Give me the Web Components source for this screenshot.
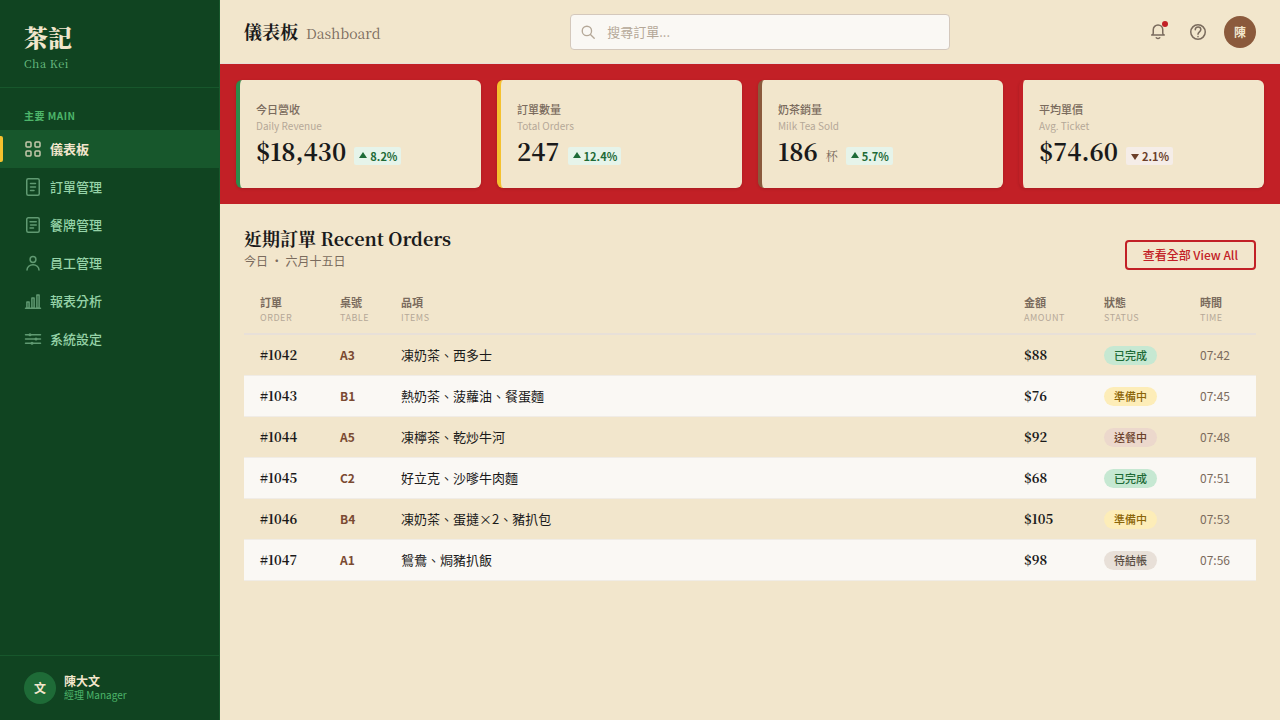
<!DOCTYPE html>
<html lang="zh-Hant">
<head>
<meta charset="utf-8">
<meta name="viewport" content="width=device-width, initial-scale=1">
<title>茶記 Cha Kei</title>
<style>
  :root {
    --cream: #f2e6cc;
    --paper: #faf8f4;
    --ink: #1a1a1a;
    --muted: #7a6b5d;
    --faint: #b5a898;
    --line: #e8e0d8;
    --red: #c22026;
    --yellow: #f5c12e;
    --brown: #8b5a3c;
    --brown-dark: #6b3f2a;
    --green-900: #104421;
    --green-800: #17572c;
    --green-700: #1e6b37;
    --green-500: #2d8b4a;
    --green-400: #4db56a;
    --green-200: #96d3a8;
    --sans: "Noto Sans CJK TC", "Noto Sans TC", sans-serif;
    --serif: "Noto Serif CJK TC", "Noto Serif TC", serif;
  }

  body {
    margin: 0;
    font-family: var(--sans);
    color: var(--ink);
    background: var(--cream);
  }
</style>
</head>
<body>
<tea-dashboard></tea-dashboard>

<script>
const NAV = [
  { icon: "grid", label: "儀表板", active: true },
  { icon: "order", label: "訂單管理" },
  { icon: "menu", label: "餐牌管理" },
  { icon: "user", label: "員工管理" },
  { icon: "chart", label: "報表分析" },
  { icon: "sliders", label: "系統設定" }
];

const STATS = [
  { label: "今日營收", sub: "Daily Revenue", value: "$18,430", trend: "up", delta: "8.2%", color: "green-500" },
  { label: "訂單數量", sub: "Total Orders", value: "247", trend: "up", delta: "12.4%", color: "yellow" },
  { label: "奶茶銷量", sub: "Milk Tea Sold", value: "186", unit: "杯", trend: "up", delta: "5.7%", color: "brown" },
  { label: "平均單價", sub: "Avg. Ticket", value: "$74.60", trend: "down", delta: "2.1%", color: "red" }
];

const COLUMNS = [
  ["訂單", "Order"], ["桌號", "Table"], ["品項", "Items"],
  ["金額", "Amount"], ["狀態", "Status"], ["時間", "Time"]
];

const ORDERS = [
  ["#1042", "A3", "凍奶茶、西多士", "$88", "done", "07:42"],
  ["#1043", "B1", "熱奶茶、菠蘿油、餐蛋麵", "$76", "preparing", "07:45"],
  ["#1044", "A5", "凍檸茶、乾炒牛河", "$92", "serving", "07:48"],
  ["#1045", "C2", "好立克、沙嗲牛肉麵", "$68", "done", "07:51"],
  ["#1046", "B4", "凍奶茶、蛋撻×2、豬扒包", "$105", "preparing", "07:53"],
  ["#1047", "A1", "鴛鴦、焗豬扒飯", "$98", "unpaid", "07:56"]
];

const STATUS = {
  done: "已完成",
  preparing: "準備中",
  serving: "送餐中",
  unpaid: "待結帳"
};

/* Every icon is drawn on an 18x18 grid */
const ICONS = {
  grid: `<rect x="2" y="2" width="5" height="5" rx="1"/><rect x="11" y="2" width="5" height="5" rx="1"/><rect x="2" y="11" width="5" height="5" rx="1"/><rect x="11" y="11" width="5" height="5" rx="1"/>`,
  order: `<rect x="2.75" y="0.75" width="12.5" height="16.5" rx="1.5"/><path d="M6.5 5.5h5M6.5 9h5M6.5 12.5h3.5"/>`,
  menu: `<rect x="2.75" y="1.75" width="12.5" height="14.5" rx="1.5"/><path d="M6 5.75h6.25M6.5 9h5.75M6 12h3.5"/>`,
  user: `<circle cx="9" cy="5.5" r="2.9"/><path d="M3 16a6 5.25 0 0 1 12 0"/>`,
  chart: `<path d="M1.5 16.25h15"/><rect x="2.9" y="10" width="2.2" height="6.25"/><rect x="7.9" y="6" width="2.2" height="10.25"/><rect x="12.9" y="3" width="2.2" height="13.25"/>`,
  sliders: `<path d="M1.5 4.75h15M1.5 9h15M1.5 13.25h15"/><g fill="currentColor" stroke="none"><circle cx="6" cy="4.75" r="1.5"/><circle cx="12" cy="9" r="1.5"/><circle cx="8" cy="13.25" r="1.5"/></g>`,
  search: `<circle cx="7.75" cy="7.75" r="5.25"/><path d="M11.75 11.75l4.25 4.25"/>`,
  bell: `<path d="M9 2a4.75 4.75 0 0 0-4.75 4.75v3.5c0 .9-.6 1.5-1.5 1.75h12.5c-.9-.25-1.5-.85-1.5-1.75v-3.5A4.75 4.75 0 0 0 9 2z"/><path d="M7.25 14.75q1.75 1.5 3.5 0"/>`,
  help: `<circle cx="9" cy="9" r="7.25"/><path d="M6.25 6.75C6.25 5 7.5 4 9.1 4s2.75 1.1 2.75 2.6c0 2.2-2.85 2.3-2.85 4.65"/><path d="M9 13.6v.2"/>`
};

class TeaIcon extends HTMLElement {
  constructor() {
    super();
    this.attachShadow({ mode: "open" });
  }

  static get styles() {
    return /* css */`
      :host {
        display: block;
        flex: none;
        width: 18px;
        height: 18px;
      }

      svg {
        display: block;
        width: 100%;
        height: 100%;
        fill: none;
        stroke: currentColor;
        stroke-width: 1.5;
        stroke-linecap: round;
        stroke-linejoin: round;
      }
    `;
  }

  connectedCallback() {
    this.shadowRoot.innerHTML = /* html */`
    <style>${TeaIcon.styles}</style>
    <svg viewBox="0 0 18 18" aria-hidden="true">${ICONS[this.getAttribute("name")]}</svg>
    `;
  }
}

customElements.define("tea-icon", TeaIcon);

class TeaAvatar extends HTMLElement {
  constructor() {
    super();
    this.attachShadow({ mode: "open" });
  }

  static get styles() {
    return /* css */`
      :host {
        display: flex;
        flex: none;
        align-items: center;
        justify-content: center;
        width: 32px;
        height: 32px;
        border-radius: 50%;
        background: var(--avatar-color, var(--brown));
        color: var(--cream);
        font-size: 12px;
        line-height: 18px;
        font-weight: 700;
      }
    `;
  }

  connectedCallback() {
    this.shadowRoot.innerHTML = /* html */`
    <style>${TeaAvatar.styles}</style>
    <slot></slot>
    `;
  }
}

customElements.define("tea-avatar", TeaAvatar);

class NavItem extends HTMLElement {
  constructor() {
    super();
    this.attachShadow({ mode: "open" });
  }

  static get styles() {
    return /* css */`
      :host {
        display: block;
      }

      a {
        display: flex;
        align-items: center;
        gap: 8px;
        padding: 9px 24px;
        position: relative;
        color: var(--green-200);
        font-size: 13px;
        line-height: 20px;
        font-weight: 500;
        text-decoration: none;
      }

      tea-icon {
        opacity: 0.6;
      }

      :host([active]) a {
        background: var(--green-800);
        color: var(--cream);
        font-weight: 700;
      }

      :host([active]) tea-icon {
        opacity: 0.8;
      }

      :host([active]) a::before {
        content: "";
        position: absolute;
        left: 0;
        top: 6px;
        bottom: 6px;
        width: 3px;
        background: var(--yellow);
        border-radius: 0 2px 2px 0;
      }
    `;
  }

  connectedCallback() {
    this.shadowRoot.innerHTML = /* html */`
    <style>${NavItem.styles}</style>
    <a href="#"><tea-icon name="${this.getAttribute("icon")}"></tea-icon><slot></slot></a>
    `;
  }
}

customElements.define("nav-item", NavItem);

class SideBar extends HTMLElement {
  constructor() {
    super();
    this.attachShadow({ mode: "open" });
  }

  static get styles() {
    return /* css */`
      :host {
        display: flex;
        flex-direction: column;
        box-sizing: border-box;
        background: var(--green-900);
        border-right: 1px solid var(--green-800);
      }

      .brand {
        padding: 20px 24px 15px;
        border-bottom: 1px solid var(--green-800);
        font-family: var(--serif);
      }

      .name {
        color: var(--cream);
        font-size: 24px;
        line-height: 34px;
        font-weight: 900;
      }

      .latin {
        color: #6cc085;
        font-size: 11px;
        line-height: 18px;
        letter-spacing: 0.5px;
      }

      nav {
        flex: 1;
        padding-top: 20px;
      }

      h2 {
        margin: 0;
        padding: 0 24px 6px;
        color: var(--green-400);
        font-size: 10px;
        line-height: 16px;
        font-weight: 700;
        letter-spacing: 0.5px;
      }

      .account {
        display: flex;
        align-items: center;
        gap: 8px;
        padding: 16px 24px;
        border-top: 1px solid var(--green-800);
        --avatar-color: var(--green-700);
      }

      .person {
        color: var(--cream);
        font-size: 12px;
        line-height: 14px;
        font-weight: 700;
      }

      .role {
        color: var(--green-400);
        font-size: 10px;
        line-height: 14px;
      }
    `;
  }

  connectedCallback() {
    const items = NAV.map(({ icon, label, active }) =>
      `<nav-item icon="${icon}"${active ? " active" : ""}>${label}</nav-item>`).join("");

    this.shadowRoot.innerHTML = /* html */`
    <style>${SideBar.styles}</style>
    <div class="brand">
      <div class="name">茶記</div>
      <div class="latin">Cha Kei</div>
    </div>
    <nav>
      <h2>主要 MAIN</h2>
      ${items}
    </nav>
    <div class="account">
      <tea-avatar>文</tea-avatar>
      <div>
        <div class="person">陳大文</div>
        <div class="role">經理 Manager</div>
      </div>
    </div>
    `;
  }
}

customElements.define("side-bar", SideBar);

class TopBar extends HTMLElement {
  constructor() {
    super();
    this.attachShadow({ mode: "open" });
  }

  static get styles() {
    return /* css */`
      :host {
        display: flex;
        align-items: center;
        justify-content: space-between;
        gap: 16px;
        padding: 14px 24px 13px;
        border-bottom: 1px solid var(--line);
      }

      h1 {
        display: flex;
        align-items: baseline;
        gap: 8px;
        margin: 0;
        font-family: var(--serif);
        font-size: 18px;
        line-height: 26px;
        font-weight: 700;
        white-space: nowrap;
      }

      h1 span {
        color: var(--muted);
        font-size: 14px;
        font-weight: 400;
      }

      .search {
        display: flex;
        flex: 0 1 380px;
        align-items: center;
        gap: 11px;
        box-sizing: border-box;
        height: 36px;
        padding: 0 9px;
        border: 1px solid #d4c8bc;
        border-radius: 4px;
        background: var(--paper);
        color: var(--faint);
      }

      .search tea-icon {
        width: 16px;
        height: 16px;
      }

      input {
        flex: 1;
        min-width: 0;
        padding: 0;
        border: 0;
        outline: 0;
        background: none;
        color: var(--ink);
        font: 13px/20px var(--sans);
      }

      input::placeholder {
        color: var(--faint);
      }

      .tools,
      .buttons {
        display: flex;
        align-items: center;
      }

      .tools {
        gap: 8px;
      }

      .buttons {
        gap: 4px;
      }

      button {
        display: flex;
        align-items: center;
        justify-content: center;
        position: relative;
        width: 36px;
        height: 36px;
        padding: 0;
        border: 0;
        background: none;
        color: var(--muted);
      }

      .dot {
        position: absolute;
        top: 7px;
        right: 8px;
        width: 6px;
        height: 6px;
        border-radius: 50%;
        background: var(--red);
      }
    `;
  }

  connectedCallback() {
    this.shadowRoot.innerHTML = /* html */`
    <style>${TopBar.styles}</style>
    <h1>儀表板 <span>Dashboard</span></h1>
    <label class="search">
      <tea-icon name="search"></tea-icon>
      <input type="search" placeholder="搜尋訂單..." aria-label="搜尋訂單">
    </label>
    <div class="tools">
      <div class="buttons">
        <button type="button" aria-label="通知"><tea-icon name="bell"></tea-icon><span class="dot"></span></button>
        <button type="button" aria-label="說明"><tea-icon name="help"></tea-icon></button>
      </div>
      <tea-avatar>陳</tea-avatar>
    </div>
    `;
  }
}

customElements.define("top-bar", TopBar);

class StatCard extends HTMLElement {
  constructor() {
    super();
    this.attachShadow({ mode: "open" });
  }

  static get styles() {
    return /* css */`
      :host {
        display: block;
        padding: 20px 16px;
        border-left: 4px solid var(--accent);
        border-radius: 6px;
        background: var(--cream);
        box-shadow: 0 1px 3px #0002;
      }

      .label {
        color: var(--muted);
        font-size: 11px;
        line-height: 18px;
        font-weight: 500;
      }

      .sub {
        color: var(--faint);
        font-size: 10px;
        line-height: 16px;
      }

      .row {
        display: flex;
        align-items: baseline;
        gap: 8px;
      }

      .value {
        font-family: var(--serif);
        font-size: 24px;
        line-height: 34px;
        font-weight: 700;
        font-variant-numeric: tabular-nums;
      }

      .unit {
        color: var(--muted);
        font-family: var(--serif);
        font-size: 12px;
        font-weight: 400;
      }

      .delta {
        display: flex;
        align-items: center;
        gap: 2px;
        padding: 0 4px;
        border-radius: 2px;
        background: #e6f4ea;
        color: var(--green-700);
        font-size: 11px;
        line-height: 18px;
        font-weight: 700;
      }

      .delta.down {
        background: #f5ede8;
        color: var(--brown-dark);
      }

      svg {
        width: 10px;
        height: 10px;
        fill: currentColor;
      }
    `;
  }

  connectedCallback() {
    const { label, sub, value, unit, trend, delta, color } = this.stat;
    const arrow = trend === "up" ? "M5 1L9 7H1z" : "M1 3h8L5 9z";

    this.style.setProperty("--accent", `var(--${color})`);
    this.shadowRoot.innerHTML = /* html */`
    <style>${StatCard.styles}</style>
    <div class="label">${label}</div>
    <div class="sub">${sub}</div>
    <div class="row">
      <span class="value">${value}</span>
      ${unit ? `<span class="unit">${unit}</span>` : ""}
      <span class="delta ${trend}"><svg viewBox="0 0 10 10" aria-hidden="true"><path d="${arrow}"/></svg>${delta}</span>
    </div>
    `;
  }
}

customElements.define("stat-card", StatCard);

class StatStrip extends HTMLElement {
  constructor() {
    super();
    this.attachShadow({ mode: "open" });
  }

  static get styles() {
    return /* css */`
      :host {
        display: grid;
        grid-template-columns: repeat(4, 1fr);
        gap: 16px;
        padding: 16px;
        background: var(--red);
      }
    `;
  }

  connectedCallback() {
    this.shadowRoot.innerHTML = `<style>${StatStrip.styles}</style>`;
    STATS.forEach(stat => {
      const card = document.createElement("stat-card");
      card.stat = stat;
      this.shadowRoot.append(card);
    });
  }
}

customElements.define("stat-strip", StatStrip);

class StatusBadge extends HTMLElement {
  constructor() {
    super();
    this.attachShadow({ mode: "open" });
  }

  static get styles() {
    return /* css */`
      :host {
        display: block;
        width: fit-content;
        padding: 0 10px;
        border-radius: 10px;
        font-size: 11px;
        line-height: 19px;
        font-weight: 500;
        white-space: nowrap;
      }

      :host([type="done"]) {
        background: #c6e8d2;
        color: var(--green-700);
      }

      :host([type="preparing"]) {
        background: #fdedb8;
        color: #8b6508;
      }

      :host([type="serving"]) {
        background: #ecd8cc;
        color: var(--brown-dark);
      }

      :host([type="unpaid"]) {
        background: var(--line);
        color: #5a4e44;
      }
    `;
  }

  connectedCallback() {
    this.shadowRoot.innerHTML = /* html */`
    <style>${StatusBadge.styles}</style>
    ${STATUS[this.getAttribute("type")]}
    `;
  }
}

customElements.define("status-badge", StatusBadge);

class OrderTable extends HTMLElement {
  constructor() {
    super();
    this.attachShadow({ mode: "open" });
  }

  static get styles() {
    return /* css */`
      :host {
        display: block;
      }

      table {
        width: 100%;
        table-layout: fixed;
        border-collapse: separate;
        border-spacing: 0;
      }

      th,
      td {
        box-sizing: border-box;
      }

      th {
        padding: 8px 16px 7px;
        border-bottom: 2px solid var(--line);
        color: var(--muted);
        font-size: 11px;
        line-height: 16px;
        font-weight: 700;
        text-align: left;
      }

      th span {
        display: block;
        color: var(--faint);
        font-size: 9px;
        font-weight: 400;
        letter-spacing: 0.5px;
        text-transform: uppercase;
      }

      th:nth-child(1),
      th:nth-child(4) {
        width: 80px;
      }

      th:nth-child(2) {
        width: 61px;
      }

      th:nth-child(5) {
        width: 96px;
      }

      th:nth-child(6) {
        width: 72px;
      }

      td {
        padding: 10px 16px;
        border-bottom: 1px solid #f0ece6;
        font-size: 13px;
        line-height: 20px;
        white-space: nowrap;
      }

      tbody tr:nth-child(even) {
        background: var(--paper);
      }

      .id,
      .amount {
        font-family: var(--serif);
        font-weight: 700;
        font-variant-numeric: tabular-nums;
      }

      .table {
        color: #7a4a32;
        font-size: 12px;
        font-weight: 600;
      }

      .time {
        color: var(--muted);
        font-size: 12px;
      }
    `;
  }

  connectedCallback() {
    const head = COLUMNS.map(([zh, en]) => `<th scope="col">${zh}<span>${en}</span></th>`).join("");
    const rows = ORDERS.map(([id, table, items, amount, status, time]) => /* html */`
      <tr>
        <td class="id">${id}</td>
        <td class="table">${table}</td>
        <td>${items}</td>
        <td class="amount">${amount}</td>
        <td><status-badge type="${status}"></status-badge></td>
        <td class="time">${time}</td>
      </tr>`).join("");

    this.shadowRoot.innerHTML = /* html */`
    <style>${OrderTable.styles}</style>
    <table>
      <thead><tr>${head}</tr></thead>
      <tbody>${rows}</tbody>
    </table>
    `;
  }
}

customElements.define("order-table", OrderTable);

class RecentOrders extends HTMLElement {
  constructor() {
    super();
    this.attachShadow({ mode: "open" });
  }

  static get styles() {
    return /* css */`
      :host {
        display: block;
        padding: 22px 24px;
      }

      header {
        display: flex;
        align-items: flex-end;
        justify-content: space-between;
        margin-bottom: 16px;
      }

      h2 {
        margin: 0 0 2px;
        font-family: var(--serif);
        font-size: 18px;
        line-height: 24px;
        font-weight: 700;
      }

      p {
        margin: 0;
        color: var(--muted);
        font-size: 12px;
        line-height: 18px;
      }

      button {
        padding: 4px 16px;
        border: 2px solid var(--red);
        border-radius: 4px;
        background: none;
        color: var(--red);
        font: 500 12px/18px var(--sans);
      }
    `;
  }

  connectedCallback() {
    this.shadowRoot.innerHTML = /* html */`
    <style>${RecentOrders.styles}</style>
    <header>
      <div>
        <h2>近期訂單 Recent Orders</h2>
        <p>今日 ・ 六月十五日</p>
      </div>
      <button type="button">查看全部 View All</button>
    </header>
    <order-table></order-table>
    `;
  }
}

customElements.define("recent-orders", RecentOrders);

class TeaDashboard extends HTMLElement {
  constructor() {
    super();
    this.attachShadow({ mode: "open" });
  }

  static get styles() {
    return /* css */`
      :host {
        display: grid;
        grid-template-columns: 220px 1fr;
        min-height: 100vh;
      }

      main {
        min-width: 0;
      }
    `;
  }

  connectedCallback() {
    this.shadowRoot.innerHTML = /* html */`
    <style>${TeaDashboard.styles}</style>
    <side-bar></side-bar>
    <main>
      <top-bar></top-bar>
      <stat-strip></stat-strip>
      <recent-orders></recent-orders>
    </main>
    `;
  }
}

customElements.define("tea-dashboard", TeaDashboard);
</script>
</body>
</html>
